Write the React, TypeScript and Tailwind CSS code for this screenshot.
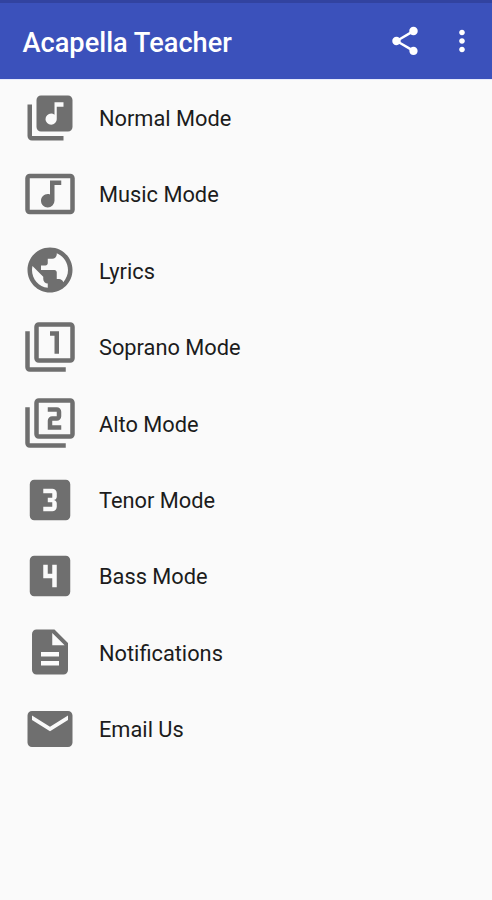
import type { IconType } from "react-icons";
import {
  MdEmail,
  MdFilter1,
  MdFilter2,
  MdDescription,
  MdLibraryMusic,
  MdLooks3,
  MdLooks4,
  MdMoreVert,
  MdMusicVideo,
  MdPublic,
  MdShare,
} from "react-icons/md";

interface MenuItem {
  label: string;
  icon: IconType;
}

const items: MenuItem[] = [
  { label: "Normal Mode", icon: MdLibraryMusic },
  { label: "Music Mode", icon: MdMusicVideo },
  { label: "Lyrics", icon: MdPublic },
  { label: "Soprano Mode", icon: MdFilter1 },
  { label: "Alto Mode", icon: MdFilter2 },
  { label: "Tenor Mode", icon: MdLooks3 },
  { label: "Bass Mode", icon: MdLooks4 },
  { label: "Notifications", icon: MdDescription },
  { label: "Email Us", icon: MdEmail },
];

export default function App() {
  return (
    <div className="h-[900px] w-[492px] overflow-hidden bg-[#fafafa] font-['Roboto',sans-serif]">
      <header className="flex h-[78.5px] items-center border-t-3 border-[#3243a0] bg-[#3b51bb] pl-[22.5px] text-white">
        <h1 className="flex-1 pt-1 text-[27.2px] font-medium leading-8">Acapella Teacher</h1>
        <button type="button" aria-label="Share" className="mr-[23px]">
          <MdShare className="size-[34px]" />
        </button>
        <button type="button" aria-label="More options" className="mr-[13px]">
          <MdMoreVert className="size-[34px]" />
        </button>
      </header>

      <ul className="border-t border-[#e6eafc]">
        {items.map(({ label, icon: Icon }) => (
          <li key={label} className="flex h-[76.4px] items-center gap-[22.2px] pl-[22.8px]">
            <Icon className="size-[54px] shrink-0 text-[#6f6f6f]" />
            <span className="pt-[2.8px] text-[21.8px] leading-7 text-[#1c1c1c]">{label}</span>
          </li>
        ))}
      </ul>
    </div>
  );
}
